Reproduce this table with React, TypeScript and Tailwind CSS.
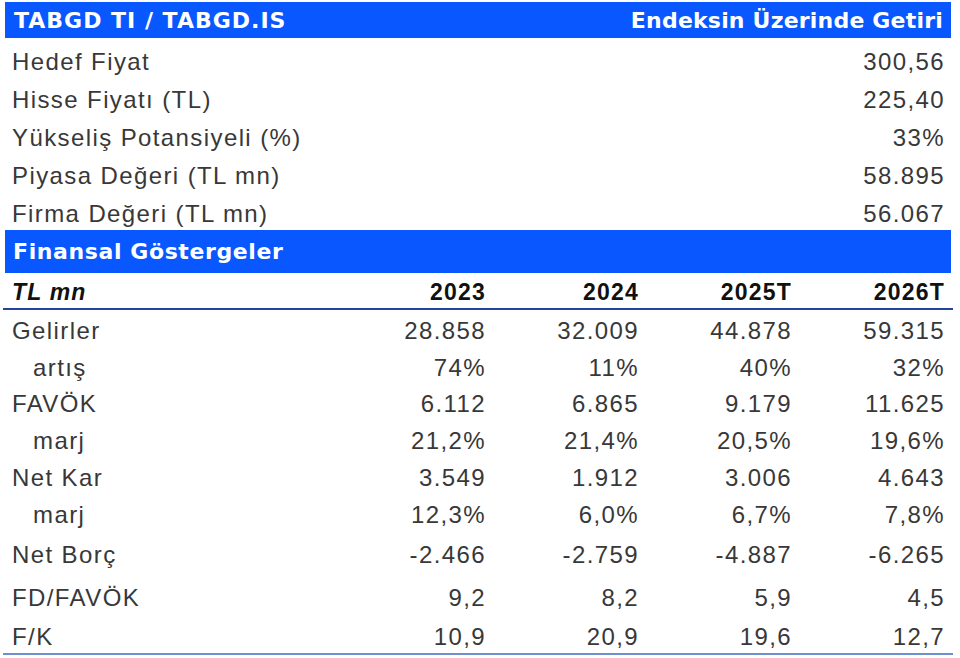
import React from "react";

const summary = [
  ["Hedef Fiyat", "300,56"],
  ["Hisse Fiyatı (TL)", "225,40"],
  ["Yükseliş Potansiyeli (%)", "33%"],
  ["Piyasa Değeri (TL mn)", "58.895"],
  ["Firma Değeri (TL mn)", "56.067"],
];

type Row = { label: string; values: string[]; indent?: boolean; h: string };

const rows: Row[] = [
  { label: "Gelirler", values: ["28.858", "32.009", "44.878", "59.315"], h: "h-[38px] pt-[3px]" },
  { label: "artış", values: ["74%", "11%", "40%", "32%"], indent: true, h: "h-[37px] pt-[2px]" },
  { label: "FAVÖK", values: ["6.112", "6.865", "9.179", "11.625"], h: "h-[37px]" },
  { label: "marj", values: ["21,2%", "21,4%", "20,5%", "19,6%"], indent: true, h: "h-[37px]" },
  { label: "Net Kar", values: ["3.549", "1.912", "3.006", "4.643"], h: "h-[37px]" },
  { label: "marj", values: ["12,3%", "6,0%", "6,7%", "7,8%"], indent: true, h: "h-[37px]" },
  { label: "Net Borç", values: ["-2.466", "-2.759", "-4.887", "-6.265"], h: "h-[44px]" },
  { label: "FD/FAVÖK", values: ["9,2", "8,2", "5,9", "4,5"], h: "h-[42px]" },
  { label: "F/K", values: ["10,9", "20,9", "19,6", "12,7"], h: "h-[34px] pb-[4px]" },
];

const body = "font-['Liberation_Sans',Arial,sans-serif] text-[24px] tracking-[1.4px] text-[#383838]";
const bar = "font-['DejaVu_Sans',Verdana,sans-serif] font-bold text-[22px] text-white bg-[#0857ff]";

export default function App() {
  return (
    <div className="w-[960px] h-[658px] bg-white pt-[2px] overflow-hidden">
      <div className="w-[946px] ml-[5px]">
        <div className={`${bar} h-[36px] flex items-center justify-between pl-[9px] pr-[8px] tracking-[1px]`}>
          <span>TABGD TI / TABGD.IS</span>
          <span className="tracking-[0.2px]">Endeksin Üzerinde Getiri</span>
        </div>
        <div className={`${body} pt-[2px]`}>
          {summary.map(([k, v]) => (
            <div key={k} className="h-[38px] pt-[5px] flex items-center justify-between pl-[7px] pr-[6px]">
              <span>{k}</span>
              <span>{v}</span>
            </div>
          ))}
        </div>
        <div className={`${bar} h-[43px] flex items-center pl-[8px] tracking-[0.6px]`}>
          Finansal Göstergeler
        </div>
      </div>
      <div className="w-[950px] ml-[3px]">
        <div className="h-[37px] pt-[2px] grid grid-cols-[330px_153px_153px_153px_153px] items-center border-b-[2px] border-[#23459a] font-['Liberation_Sans',Arial,sans-serif] font-bold text-[23px] tracking-[1.2px] text-[#111]">
          <span className="pl-[9px] italic">TL mn</span>
          <span className="text-right">2023</span>
          <span className="text-right">2024</span>
          <span className="text-right">2025T</span>
          <span className="text-right">2026T</span>
        </div>
        <div className={`${body} border-b-[2px] border-[#6d8fd0]`}>
          {rows.map((r, i) => (
            <div key={i} className={`${r.h} grid grid-cols-[330px_153px_153px_153px_153px] items-center`}>
              <span className={r.indent ? "pl-[30px]" : "pl-[9px]"}>{r.label}</span>
              {r.values.map((v, j) => (
                <span key={j} className="text-right">{v}</span>
              ))}
            </div>
          ))}
        </div>
      </div>
    </div>
  );
}
